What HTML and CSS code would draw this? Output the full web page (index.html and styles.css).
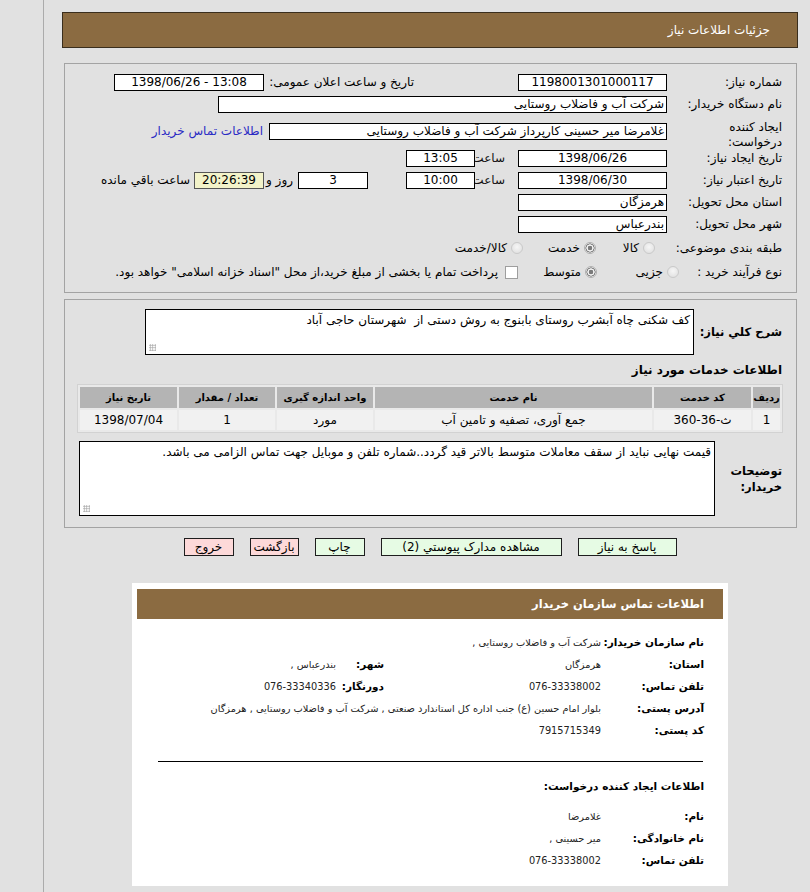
FILE: index.html
```html
<!DOCTYPE html>
<html lang="fa" dir="rtl">
<head>
<meta charset="utf-8">
<title>جزئیات اطلاعات نیاز</title>
<link rel="stylesheet" href="styles.css">
</head>
<body>
<div class="page">
  <div class="titlebar">جزئیات اطلاعات نیاز</div>

  <div class="panel p1">
    <div class="row">
      <div class="lbl">شماره نیاز:</div>
      <div class="box w149 c">1198001301000117</div>
      <div class="lbl2">تاریخ و ساعت اعلان عمومی:</div>
      <div class="box w150 c" dir="ltr">1398/06/26 - 13:08</div>
    </div>
    <div class="row">
      <div class="lbl">نام دستگاه خریدار:</div>
      <div class="box w449">شرکت آب و فاضلاب روستایی</div>
    </div>
    <div class="row tall">
      <div class="lbl two">ایجاد کننده<br>درخواست:</div>
      <div class="box w398">غلامرضا میر حسینی کارپرداز شرکت آب و فاضلاب روستایی</div>
      <a class="link" href="#">اطلاعات تماس خریدار</a>
    </div>
    <div class="row">
      <div class="lbl">تاریخ ایجاد نیاز:</div>
      <div class="box w149 c">1398/06/26</div>
      <div class="hour">ساعت</div>
      <div class="box w69 c">13:05</div>
    </div>
    <div class="row">
      <div class="lbl">تاریخ اعتبار نیاز:</div>
      <div class="box w149 c">1398/06/30</div>
      <div class="hour">ساعت</div>
      <div class="box w69 c">10:00</div>
      <div class="box w70 c days">3</div>
      <div class="dayword">روز و</div>
      <div class="box w70 c timer">20:26:39</div>
      <div class="remain">ساعت باقي مانده</div>
    </div>
    <div class="row">
      <div class="lbl">استان محل تحویل:</div>
      <div class="box w149">هرمزگان</div>
    </div>
    <div class="row">
      <div class="lbl">شهر محل تحویل:</div>
      <div class="box w149">بندرعباس</div>
    </div>
    <div class="row r8">
      <div class="lbl">طبقه بندی موضوعی:</div>
      <div class="opt o1"><span class="radio"></span><span>کالا</span></div>
      <div class="opt o2"><span class="radio on"></span><span>خدمت</span></div>
      <div class="opt"><span class="radio"></span><span>کالا/خدمت</span></div>
    </div>
    <div class="row">
      <div class="lbl narrow">نوع فرآیند خرید :</div>
      <div class="opt o4"><span class="radio"></span><span>جزیی</span></div>
      <div class="opt o5"><span class="radio on"></span><span>متوسط</span></div>
      <div class="opt"><span class="check"></span><span class="note">پرداخت تمام یا بخشی از مبلغ خرید،از محل "اسناد خزانه اسلامی" خواهد بود.</span></div>
    </div>
  </div>

  <div class="panel p2">
    <div class="arow">
      <div class="blbl w88">شرح کلي نیاز:</div>
      <div class="ta ta1">کف شکنی چاه آبشرب روستای بابنوج به روش دستی از&nbsp; شهرستان حاجی آباد</div>
    </div>
    <div class="heading">اطلاعات خدمات مورد نیاز</div>
    <table class="grid">
      <thead>
        <tr>
          <th class="c1">ردیف</th>
          <th class="c2">کد خدمت</th>
          <th class="c3">نام خدمت</th>
          <th class="c4">واحد اندازه گیری</th>
          <th class="c5">تعداد / مقدار</th>
          <th class="c6">تاریخ نیاز</th>
        </tr>
      </thead>
      <tbody>
        <tr>
          <td>1</td>
          <td>ث-36-360</td>
          <td>جمع آوری، تصفیه و تامین آب</td>
          <td>مورد</td>
          <td>1</td>
          <td>1398/07/04</td>
        </tr>
      </tbody>
    </table>
    <div class="arow crow">
      <div class="blbl w67">توضیحات<br>خریدار:</div>
      <div class="ta ta2">قیمت نهایی نباید از سقف معاملات متوسط بالاتر قید گردد..شماره تلفن و موبایل جهت تماس الزامی می باشد.</div>
    </div>
  </div>

  <div class="btns">
    <span class="btn green b1">پاسخ به نیاز</span>
    <span class="btn green b2">مشاهده مدارک پیوستي (2)</span>
    <span class="btn green b3">چاپ</span>
    <span class="btn pink b4">بازگشت</span>
    <span class="btn pink b3">خروج</span>
  </div>

  <div class="contact">
    <div class="chead">اطلاعات تماس سازمان خریدار</div>
    <div class="cgrid">
      <div class="cl">نام سازمان خریدار:</div>
      <div class="cv span3">شرکت آب و فاضلاب روستایی ,</div>

      <div class="cl">استان:</div>
      <div class="cv">هرمزگان</div>
      <div class="cl">شهر:</div>
      <div class="cv">بندرعباس ,</div>

      <div class="cl">تلفن تماس:</div>
      <div class="cv">076-33338002</div>
      <div class="cl">دورنگار:</div>
      <div class="cv">076-33340336</div>

      <div class="cl">آدرس پستی:</div>
      <div class="cv span3">بلوار امام حسین (ع) جنب اداره کل استاندارد صنعتی , شرکت آب و فاضلاب روستایی , هرمزگان</div>

      <div class="cl">کد پستی:</div>
      <div class="cv span3">7915715349</div>
    </div>
    <div class="rule"></div>
    <div class="csub">اطلاعات ایجاد کننده درخواست:</div>
    <div class="cgrid g2">
      <div class="cl">نام:</div>
      <div class="cv span3">غلامرضا</div>
      <div class="cl">نام خانوادگی:</div>
      <div class="cv span3">میر حسینی ,</div>
      <div class="cl">تلفن تماس:</div>
      <div class="cv span3">076-33338002</div>
    </div>
  </div>
</div>
</body>
</html>
```

FILE: styles.css
```css
* { box-sizing: border-box; }

html, body {
  margin: 0;
  height: 100%;
}

body {
  background: #e1e1e1;
  font-family: "DejaVu Sans", sans-serif;
  font-size: 12px;
  color: #000;
  direction: rtl;
}

.page {
  margin-left: 43px;
  border-left: 1px solid #ababab;
  min-height: 100%;
  padding: 12px 12px 5px 18px;
}

.titlebar {
  height: 36px;
  background: #8b6b41;
  border: 1px solid #3a2e1d;
  color: #fff;
  font-size: 12px;
  display: flex;
  align-items: center;
  padding-right: 27px;
}

.panel {
  margin: 15px 1px 0 2px;
  border: 1px solid #a3a3a3;
  padding: 7px 14px 9px 0;
}

.p2 {
  margin-top: 6px;
  padding: 9px 14px 11px 0;
}

.row {
  display: flex;
  align-items: center;
  height: 22px;
}

.row.tall { height: 32px; }
.row.r8 { height: 26px; }

.lbl {
  width: 115px;
  flex: none;
  line-height: 15px;
}

.lbl.two { margin-top: 7px; }

.lbl.narrow { width: 103px; }

.box {
  flex: none;
  height: 17px;
  border: 1px solid #000;
  background: #fff;
  line-height: 15px;
  padding: 0 2px;
  white-space: nowrap;
  overflow: hidden;
}

.box.c { text-align: center; }

.w149 { width: 149px; }
.w150 { width: 150px; }
.w449 { width: 449px; }
.w398 { width: 398px; }
.w69 { width: 69px; }
.w70 { width: 70px; }

.lbl2 {
  flex: none;
  width: 150px;
  margin-right: 104px;
  white-space: nowrap;
}

.link {
  margin-right: 6px;
  color: #2a2ac4;
  text-decoration: none;
  white-space: nowrap;
}

.hour {
  flex: none;
  width: 43px;
  padding-right: 13px;
  color: #111;
}

.days { margin-right: 38px; }

.dayword {
  flex: none;
  width: 34px;
  padding-right: 5px;
  white-space: nowrap;
}

.timer {
  width: 70px;
  background: #f3f3c9;
  border-color: #555;
}

.remain {
  margin-right: 4px;
  white-space: nowrap;
}

.opt {
  display: flex;
  align-items: center;
  gap: 4px;
  flex: none;
  white-space: nowrap;
}

.o1 { width: 59px; margin-right: 12px; }
.o2 { width: 73px; }
.o4 { width: 82px; }
.o5 { width: 79px; }

.radio {
  width: 12px;
  height: 12px;
  border-radius: 50%;
  border: 1px solid #c9c9c9;
  background: radial-gradient(circle at 50% 40%, #f6f6f6 0, #e4e4e4 70%);
  flex: none;
}

.radio.on {
  border-color: #b0b0b0;
  background: radial-gradient(circle, #7a7a7a 0 2px, #f4f4f4 2.6px 3.4px, #8a8a8a 3.8px 4.4px, #ececec 4.8px);
}

.check {
  width: 13px;
  height: 13px;
  border: 1px solid #9e9e9e;
  background: #fff;
  flex: none;
  margin-left: 3px;
}

.note { white-space: nowrap; }

.arow {
  display: flex;
  align-items: center;
}

.blbl {
  flex: none;
  font-weight: bold;
  font-size: 11.5px;
  line-height: 16px;
}

.w88 { width: 88px; white-space: nowrap; }
.w67 { width: 67px; }

.ta {
  position: relative;
  background: #fff;
  border: 1px solid #000;
  padding: 2px 3px;
  line-height: 16px;
  flex: none;
}

.ta::after {
  content: "";
  position: absolute;
  left: 3px;
  bottom: 3px;
  width: 7px;
  height: 7px;
  background: radial-gradient(circle, #a8a8a8 0 0.8px, transparent 1px) 0 0 / 2.5px 2.5px;
}

.ta1 { width: 549px; height: 46px; }
.ta2 { width: 636px; height: 75px; }

.heading {
  margin-top: 6px;
  height: 18px;
  line-height: 18px;
  font-weight: bold;
  font-size: 12px;
}

.grid {
  margin-top: 5px;
  width: 703px;
  margin-right: -1px;
  border: 1px solid #d2d2d2;
  border-spacing: 2px;
  background: #e9e9e9;
  table-layout: fixed;
}

.grid th {
  background: #b4b4b4;
  height: 21px;
  font-size: 10px;
  line-height: 14px;
  font-weight: bold;
  padding: 0;
  white-space: nowrap;
}

.grid td {
  background: #f1f1f1;
  height: 20px;
  line-height: 14px;
  text-align: center;
  padding: 0;
}

.c1 { width: 27px; }
.c2 { width: 97px; }
.c3 { width: 277px; }
.c4 { width: 96px; }
.c5 { width: 96px; }
.c6 { width: 97px; }

.crow { margin-top: 8px; }

.btns {
  display: flex;
  justify-content: center;
  gap: 16px;
  margin-top: 10px;
}

.btn {
  display: block;
  height: 18px;
  line-height: 16px;
  border: 1px solid #1e1e1e;
  text-align: center;
  font-size: 12px;
  white-space: nowrap;
}

.green { background: #e6fbe4; }
.pink { background: #fdd9d9; }

.b1 { width: 99px; }
.b2 { width: 181px; }
.b3 { width: 50px; }
.b4 { width: 49px; }

.contact {
  width: 596px;
  margin: 27px auto 0;
  background: #fff;
  padding: 6px 5px 15px;
}

.chead {
  height: 30px;
  background: #8b6b41;
  color: #fff;
  font-weight: bold;
  font-size: 11.5px;
  display: flex;
  align-items: center;
  padding-right: 19px;
}

.cgrid {
  display: grid;
  grid-template-columns: 103px 217px 48px auto;
  grid-auto-rows: 22px;
  align-items: center;
  padding: 12px 19px 0 0;
}

.cgrid.g2 { padding-top: 8px; }

.cl {
  font-weight: bold;
  font-size: 10.5px;
  white-space: nowrap;
}

.cv {
  font-size: 9.8px;
  color: #222;
  white-space: nowrap;
}

.span3 { grid-column: span 3; }

.rule {
  margin: 20px 20px 0 21px;
  border-top: 1px solid #000;
}

.csub {
  margin-top: 13px;
  height: 22px;
  line-height: 22px;
  padding-right: 19px;
  font-weight: bold;
  font-size: 10.5px;
}
```
